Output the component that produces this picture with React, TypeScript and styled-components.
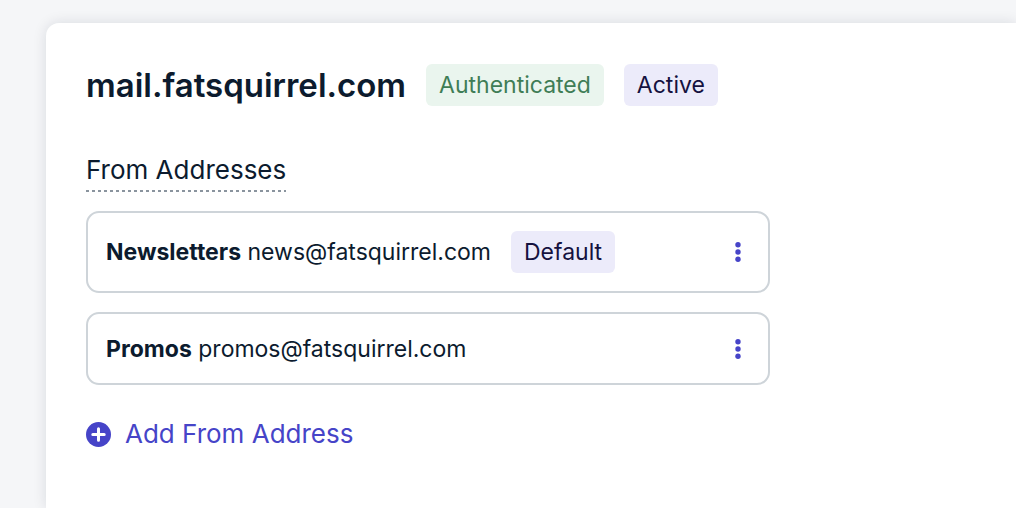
import React from "react";
import styled, { createGlobalStyle } from "styled-components";

const GlobalStyle = createGlobalStyle`
  *, *::before, *::after { box-sizing: border-box; }
  html { height: 100%; }
  body {
    margin: 0;
    min-height: 100%;
    display: flex;
    flex-direction: column;
    overflow: hidden;
    background: #f5f6f8;
    color: #0c1b2e;
    font-family: Inter, "Liberation Sans", sans-serif;
  }
  #root { flex: 1; display: flex; }
  button { font: inherit; color: inherit; background: none; border: 0; padding: 0; cursor: pointer; }
`;

const Page = styled.main`
  flex: 1;
  display: flex;
  padding: 23px 0 0 46px;
`;

const Card = styled.section`
  flex: 1;
  padding: 41px 40px;
  background: #fff;
  border-radius: 13px 0 0 0;
  box-shadow: 0 0 14px rgba(12, 27, 46, 0.12);
`;

const Header = styled.header`
  display: flex;
  align-items: center;
  gap: 20px;
`;

const Domain = styled.h1`
  margin: 0;
  font-size: 33px;
  line-height: 42px;
  font-weight: 600;
`;

const Badge = styled.span<{ $tone: "success" | "info" }>`
  padding: 5px 13px;
  border-radius: 6px;
  font-size: 23px;
  line-height: 32px;
  color: ${(p) => (p.$tone === "success" ? "#3f7d56" : "#15123f")};
  background: ${(p) => (p.$tone === "success" ? "#eaf5ee" : "#ecebfa")};
`;

const SectionTitle = styled.h2`
  width: fit-content;
  margin: 48px 0 19px;
  padding-bottom: 6px;
  background: repeating-linear-gradient(90deg, #8a949e 0 3px, transparent 3px 6px) bottom / 100% 2px no-repeat;
  font-size: 26px;
  line-height: 32px;
  font-weight: 400;
`;

const AddressList = styled.ul`
  display: grid;
  gap: 19px;
  max-width: 684px;
  margin: 0;
  padding: 0;
  list-style: none;
`;

const AddressRow = styled.li`
  display: flex;
  align-items: center;
  gap: 20px;
  min-height: 73px;
  padding: 18px;
  border: 2px solid #ced4d9;
  border-radius: 13px;
  font-size: 23px;
  line-height: 32px;
`;

const MenuButton = styled.button`
  display: flex;
  justify-content: center;
  width: 24px;
  margin-left: auto;
  color: #4644c8;
`;

const AddButton = styled.button`
  && {
    display: flex;
    align-items: center;
    gap: 14px;
    margin-top: 32px;
    font-size: 26px;
    line-height: 34px;
    color: #4644c8;
  }
`;

const DotsIcon = () => (
  <svg width="6" height="20" viewBox="0 0 6 20" fill="currentColor" aria-hidden="true">
    <circle cx="3" cy="2.8" r="2.7" />
    <circle cx="3" cy="10" r="2.7" />
    <circle cx="3" cy="17.2" r="2.7" />
  </svg>
);

const PlusIcon = () => (
  <svg width="25" height="25" viewBox="0 0 25 25" aria-hidden="true">
    <circle cx="12.5" cy="12.5" r="12.5" fill="currentColor" />
    <path d="M12.5 6.8v11.4M6.8 12.5h11.4" stroke="#fff" strokeWidth="3" strokeLinecap="round" />
  </svg>
);

const addresses = [
  { name: "Newsletters", email: "news@fatsquirrel.com", isDefault: true },
  { name: "Promos", email: "promos@fatsquirrel.com", isDefault: false },
];

export default function App() {
  return (
    <>
      <GlobalStyle />
      <Page>
        <Card>
          <Header>
            <Domain>mail.fatsquirrel.com</Domain>
            <Badge $tone="success">Authenticated</Badge>
            <Badge $tone="info">Active</Badge>
          </Header>
          <SectionTitle>From Addresses</SectionTitle>
          <AddressList>
            {addresses.map((a) => (
              <AddressRow key={a.email}>
                <span>
                  <strong>{a.name}</strong> {a.email}
                </span>
                {a.isDefault && <Badge $tone="info">Default</Badge>}
                <MenuButton type="button" aria-label={`Options for ${a.name}`}>
                  <DotsIcon />
                </MenuButton>
              </AddressRow>
            ))}
          </AddressList>
          <AddButton type="button">
            <PlusIcon />
            Add From Address
          </AddButton>
        </Card>
      </Page>
    </>
  );
}
